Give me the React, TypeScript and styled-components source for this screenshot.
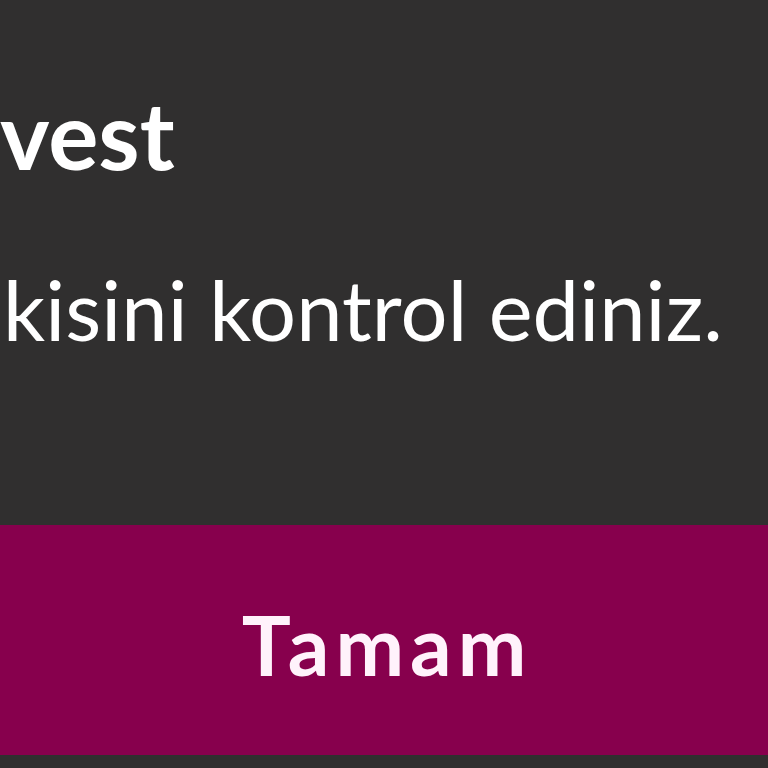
import React from "react";
import styled, { createGlobalStyle } from "styled-components";

const Global = createGlobalStyle`
  html, body { margin: 0; padding: 0; background: #302f2f; }
  body { font-family: Lato, "Noto Sans", sans-serif; overflow: hidden; }
`;

const Page = styled.div`
  width: 768px;
  height: 768px;
  background: #302f2f;
  display: flex;
  flex-direction: column;
  overflow: hidden;
`;

const Content = styled.div`
  display: flex;
  flex-direction: column;
  padding-top: 87px;
  padding-left: 0;
`;

const Title = styled.h1`
  margin: 0;
  font-family: Lato, sans-serif;
  font-weight: 700;
  font-size: 94px;
  line-height: 94px;
  color: #ffffff;
  white-space: nowrap;
`;

const Message = styled.p`
  margin: 87px 0 0 3px;
  font-family: Lato, sans-serif;
  font-weight: 400;
  font-size: 83px;
  line-height: 83px;
  letter-spacing: 0.1px;
  color: #ffffff;
  white-space: nowrap;
`;

const ActionBar = styled.div`
  margin-top: 174px;
  height: 230px;
  background: #87004d;
  display: flex;
  align-items: center;
  justify-content: center;
  padding-top: 8px;
  box-sizing: border-box;
`;

const ActionButton = styled.button`
  background: transparent;
  border: none;
  padding: 0;
  margin-right: -6px;
  font-family: Lato, sans-serif;
  font-weight: 700;
  font-size: 82px;
  line-height: 80px;
  letter-spacing: 6px;
  color: #fff2fb;
  cursor: pointer;
`;

export default function App() {
  return (
    <>
      <Global />
      <Page>
        <Content>
          <Title>vest</Title>
          <Message>kisini kontrol ediniz.</Message>
        </Content>
        <ActionBar>
          <ActionButton>Tamam</ActionButton>
        </ActionBar>
      </Page>
    </>
  );
}
